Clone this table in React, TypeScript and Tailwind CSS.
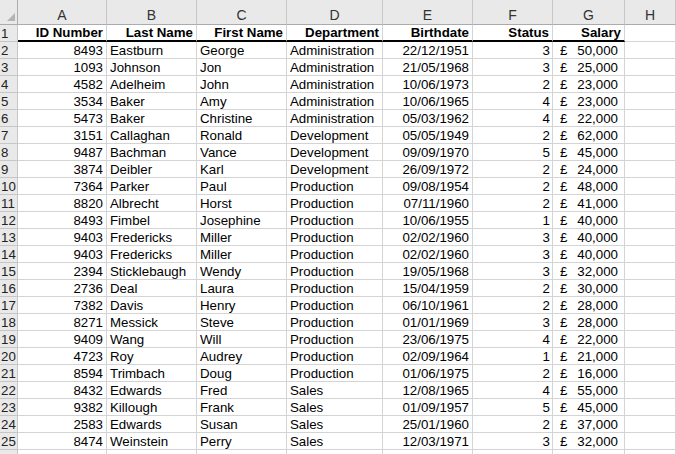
const ROWS: [string, string, string, string, string, string, string][] = [
  ["8493", "Eastburn", "George", "Administration", "22/12/1951", "3", "50,000"],
  ["1093", "Johnson", "Jon", "Administration", "21/05/1968", "3", "25,000"],
  ["4582", "Adelheim", "John", "Administration", "10/06/1973", "2", "23,000"],
  ["3534", "Baker", "Amy", "Administration", "10/06/1965", "4", "23,000"],
  ["5473", "Baker", "Christine", "Administration", "05/03/1962", "4", "22,000"],
  ["3151", "Callaghan", "Ronald", "Development", "05/05/1949", "2", "62,000"],
  ["9487", "Bachman", "Vance", "Development", "09/09/1970", "5", "45,000"],
  ["3874", "Deibler", "Karl", "Development", "26/09/1972", "2", "24,000"],
  ["7364", "Parker", "Paul", "Production", "09/08/1954", "2", "48,000"],
  ["8820", "Albrecht", "Horst", "Production", "07/11/1960", "2", "41,000"],
  ["8493", "Fimbel", "Josephine", "Production", "10/06/1955", "1", "40,000"],
  ["9403", "Fredericks", "Miller", "Production", "02/02/1960", "3", "40,000"],
  ["9403", "Fredericks", "Miller", "Production", "02/02/1960", "3", "40,000"],
  ["2394", "Sticklebaugh", "Wendy", "Production", "19/05/1968", "3", "32,000"],
  ["2736", "Deal", "Laura", "Production", "15/04/1959", "2", "30,000"],
  ["7382", "Davis", "Henry", "Production", "06/10/1961", "2", "28,000"],
  ["8271", "Messick", "Steve", "Production", "01/01/1969", "3", "28,000"],
  ["9409", "Wang", "Will", "Production", "23/06/1975", "4", "22,000"],
  ["4723", "Roy", "Audrey", "Production", "02/09/1964", "1", "21,000"],
  ["8594", "Trimbach", "Doug", "Production", "01/06/1975", "2", "16,000"],
  ["8432", "Edwards", "Fred", "Sales", "12/08/1965", "4", "55,000"],
  ["9382", "Killough", "Frank", "Sales", "01/09/1957", "5", "45,000"],
  ["2583", "Edwards", "Susan", "Sales", "25/01/1960", "2", "37,000"],
  ["8474", "Weinstein", "Perry", "Sales", "12/03/1971", "3", "32,000"],
  ["7308", "Tran", "Andy", "Sales", "12/08/1968", "2", "30,000"],
];

const COLS = "grid grid-cols-[18px_89px_90px_90px_96px_90px_80px_72px_1fr]";
const LETTERS = ["A", "B", "C", "D", "E", "F", "G", "H"];
const HEAD = ["ID Number", "Last Name", "First Name", "Department", "Birthdate", "Status", "Salary"];

const cell = "h-[17px] border-b border-r border-[#d4d4d4] leading-[18px] overflow-hidden whitespace-nowrap";

function RowNum({ n }: { n: number }) {
  return (
    <div className="h-[17px] bg-[#e9e9e9] border-b border-r border-[#c6c6c6] pl-[1px] leading-[18px] text-[#222] overflow-hidden">
      {n}
    </div>
  );
}

export default function App() {
  return (
    <div
      className="w-[676px] h-[454px] overflow-hidden bg-white text-black text-[13.3px]"
      style={{ fontFamily: '"Liberation Sans", Arial, sans-serif' }}
    >
      {/* column letters */}
      <div className={COLS}>
        <div className="h-[25px] bg-[#e9e9e9] border-b border-r border-[#ababab] flex items-end justify-end pr-[2px] pb-[3px]">
          <svg width="8" height="8" viewBox="0 0 8 8">
            <polygon points="8,0 8,8 0,8" fill="#b4b4b4" />
          </svg>
        </div>
        {LETTERS.map((l) => (
          <div
            key={l}
            className="h-[25px] bg-[#e9e9e9] border-b border-r border-b-[#ababab] border-r-[#c6c6c6] text-center text-[14px] leading-[30px] text-[#333]"
          >
            {l}
          </div>
        ))}
      </div>

      {/* header row */}
      <div className={COLS}>
        <RowNum n={1} />
        {HEAD.map((h) => (
          <div
            key={h}
            className="h-[17px] border-b-2 border-b-black border-r border-r-[#d4d4d4] font-bold text-right pr-[3px] leading-[16px] whitespace-nowrap overflow-hidden"
          >
            {h}
          </div>
        ))}
        <div className={cell} />
      </div>

      {ROWS.map((r, i) => (
        <div key={i} className={COLS}>
          <RowNum n={i + 2} />
          <div className={`${cell} text-right pr-[3px]`}>{r[0]}</div>
          <div className={`${cell} pl-[3px]`}>{r[1]}</div>
          <div className={`${cell} pl-[3px]`}>{r[2]}</div>
          <div className={`${cell} pl-[3px]`}>{r[3]}</div>
          <div className={`${cell} text-right pr-[3px]`}>{r[4]}</div>
          <div className={`${cell} text-right pr-[2px]`}>{r[5]}</div>
          <div className={`${cell} flex justify-between pl-[7px] pr-[6px]`}>
            <span>£</span>
            <span>{r[6]}</span>
          </div>
          <div className={cell} />
        </div>
      ))}
    </div>
  );
}
